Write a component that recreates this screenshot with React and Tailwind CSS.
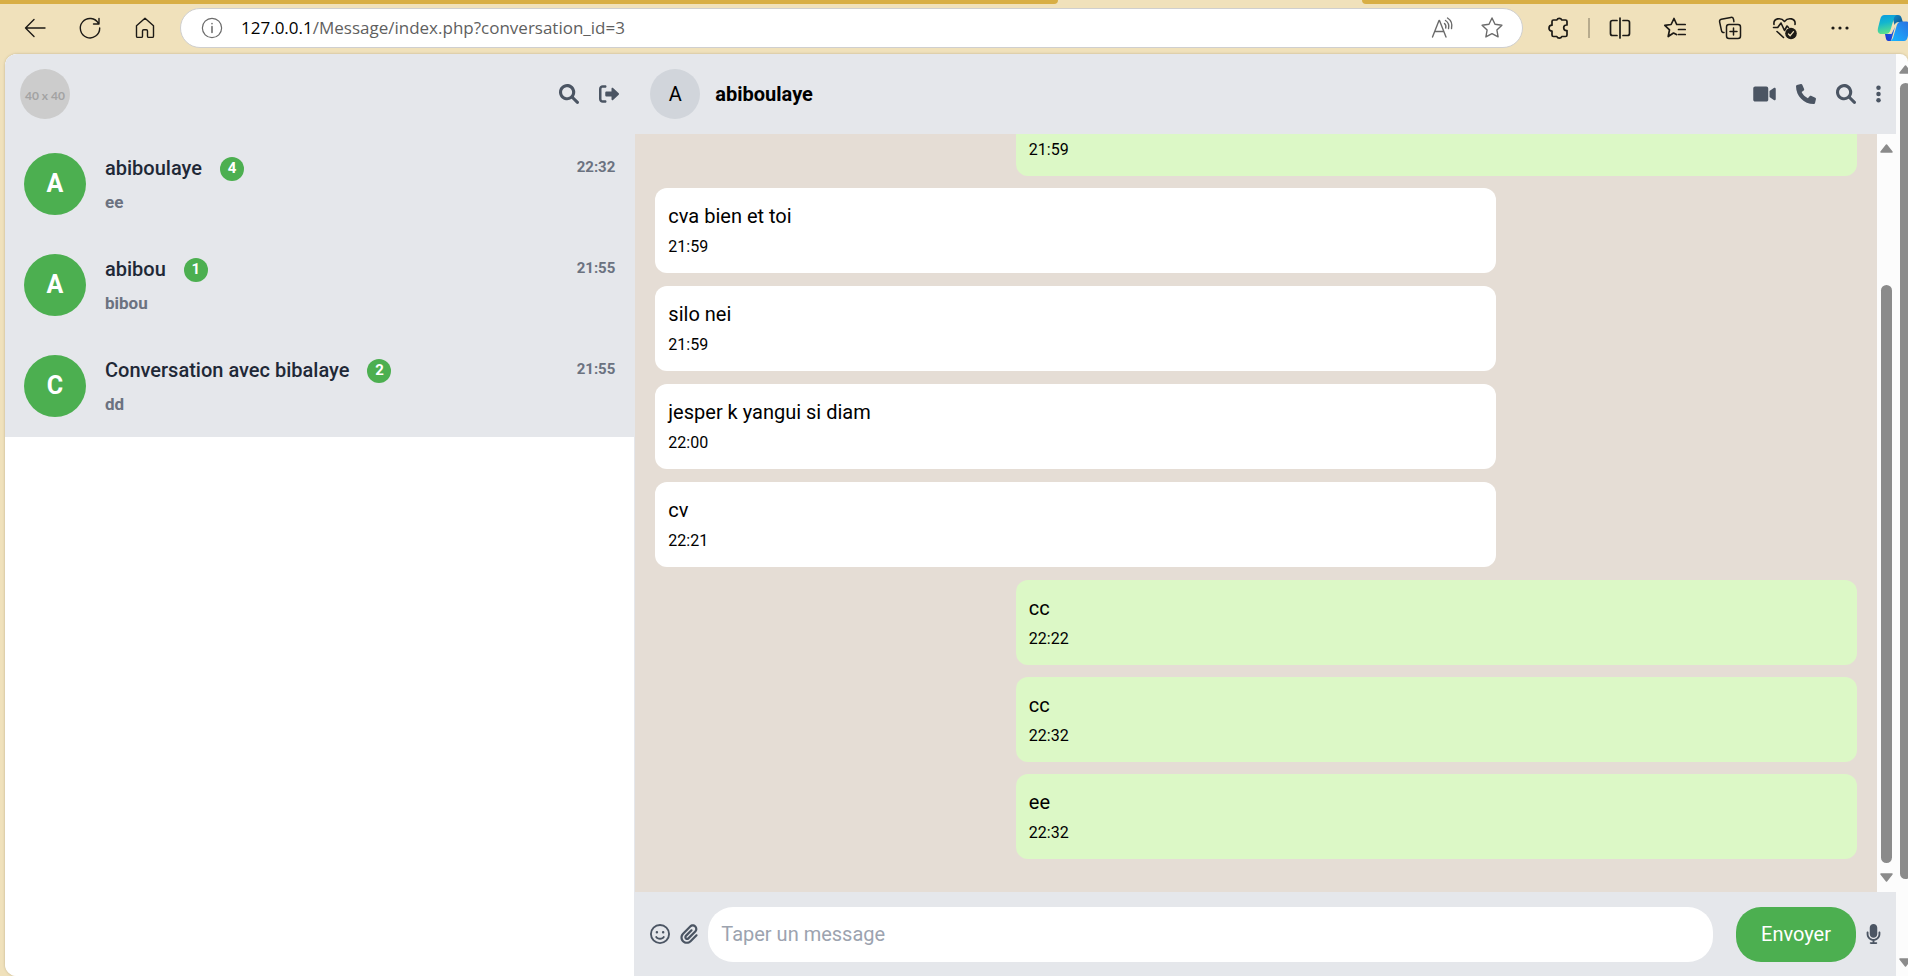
import React from "react";
import { FaRegFaceSmile, FaPaperclip, FaMicrophone } from "react-icons/fa6";

const conversations = [
  { name: "abiboulaye", initial: "A", unread: 4, time: "22:32", last: "ee" },
  { name: "abibou", initial: "A", unread: 1, time: "21:55", last: "bibou" },
  { name: "Conversation avec bibalaye", initial: "C", unread: 2, time: "21:55", last: "dd" },
];

const messages = [
  { text: "", time: "21:59", sent: true },
  { text: "cva bien et toi", time: "21:59" },
  { text: "silo nei", time: "21:59" },
  { text: "jesper k yangui si diam", time: "22:00" },
  { text: "cv", time: "22:21" },
  { text: "cc", time: "22:22", sent: true },
  { text: "cc", time: "22:32", sent: true },
  { text: "ee", time: "22:32", sent: true },
];

function Solid({ viewBox = "0 0 512 512", className, d }) {
  return (
    <svg viewBox={viewBox} className={className} fill="currentColor" aria-hidden="true">
      <path d={d} />
    </svg>
  );
}

const SearchIcon = ({ className }) => (
  <Solid
    className={className}
    d="M500.3 443.7l-119.7-119.7c27.220-40.410 40.650-90.900 33.460-144.700C401.800 87.790 326.800 13.320 235.200 1.723C99.010-15.510-15.510 99.010 1.724 235.200c11.600 91.640 86.080 166.700 177.600 178.900c53.800 7.189 104.300-6.236 144.700-33.460l119.700 119.700c15.620 15.620 40.950 15.620 56.570 0C515.900 484.700 515.900 459.300 500.300 443.700zM79.100 208c0-70.580 57.420-128 128-128s128 57.420 128 128c0 70.580-57.420 128-128 128S79.100 278.600 79.100 208z"
  />
);

const LogoutIcon = ({ className }) => (
  <Solid
    className={className}
    d="M96 480h64C177.700 480 192 465.700 192 448S177.700 416 160 416H96c-17.670 0-32-14.330-32-32V128c0-17.670 14.330-32 32-32h64C177.700 96 192 81.670 192 64S177.700 32 160 32H96C42.980 32 0 74.980 0 128v256C0 437 42.980 480 96 480zM504.800 238.500l-144.100-136c-6.975-6.578-17.200-8.375-26-4.594c-8.803 3.797-14.510 12.470-14.510 22.050l-.0918 72l-128-.001c-17.690 0-32.020 14.330-32.020 32v64c0 17.670 14.340 32 32.020 32l128 .001l.0918 71.100c0 9.578 5.707 18.250 14.510 22.050c8.803 3.781 19.030 1.984 26-4.594l144.100-136C514.400 264.400 514.400 247.600 504.800 238.500z"
  />
);

const VideoIcon = ({ className }) => (
  <Solid
    viewBox="0 0 576 512"
    className={className}
    d="M384 112v288c0 26.510-21.490 48-48 48h-288c-26.510 0-48-21.490-48-48v-288c0-26.510 21.490-48 48-48h288C362.500 64 384 85.490 384 112zM576 127.500v256.900c0 25.500-29.170 40.390-50.390 25.790L416 334.700V177.300l109.600-75.560C546.900 87.130 576 102.100 576 127.500z"
  />
);

const PhoneIcon = ({ className }) => (
  <Solid
    className={className}
    d="M511.200 387l-23.250 100.800c-3.266 14.250-15.790 24.220-30.460 24.220C205.200 512 0 306.800 0 54.500c0-14.660 9.969-27.200 24.220-30.450l100.800-23.250C139.700-2.602 154.700 5.018 160.800 18.920l46.520 108.500c5.438 12.780 1.770 27.670-8.980 36.450L144.500 207.100c33.980 69.220 90.260 125.500 159.500 159.500l44.080-53.800c8.688-10.780 23.690-14.510 36.470-8.975l108.500 46.510C506.100 357.200 514.600 372.400 511.200 387z"
  />
);

const EllipsisIcon = ({ className }) => (
  <svg viewBox="0 0 128 512" className={className} fill="currentColor" aria-hidden="true">
    <circle cx="64" cy="96" r="58" />
    <circle cx="64" cy="256" r="58" />
    <circle cx="64" cy="416" r="58" />
  </svg>
);

function Line({ children, className = "size-6", width = 1.4 }) {
  return (
    <svg
      viewBox="0 0 24 24"
      className={className}
      fill="none"
      stroke="currentColor"
      strokeWidth={width}
      strokeLinecap="round"
      strokeLinejoin="round"
      aria-hidden="true"
    >
      {children}
    </svg>
  );
}

function ToolButton({ label, children }) {
  return (
    <button type="button" aria-label={label} className="flex h-10 w-[55px] shrink-0 items-center justify-center">
      {children}
    </button>
  );
}

function Copilot() {
  return (
    <svg viewBox="0 0 36 28" className="h-7 w-9 shrink-0" aria-hidden="true">
      <defs>
        <linearGradient id="cp-a" x1="0" y1="0" x2="0.2" y2="1">
          <stop offset="0" stopColor="#0d9be0" />
          <stop offset="0.45" stopColor="#12b5cf" />
          <stop offset="1" stopColor="#5be08c" />
        </linearGradient>
        <linearGradient id="cp-b" x1="1" y1="0" x2="0" y2="1">
          <stop offset="0" stopColor="#2b6fe0" />
          <stop offset="0.6" stopColor="#1f9bf5" />
          <stop offset="1" stopColor="#12b8ff" />
        </linearGradient>
        <linearGradient id="cp-c" x1="0" y1="0" x2="1" y2="1">
          <stop offset="0" stopColor="#1390cf" />
          <stop offset="1" stopColor="#0c4f86" />
        </linearGradient>
        <linearGradient id="cp-d" x1="0" y1="1" x2="1" y2="0">
          <stop offset="0" stopColor="#1a35d0" />
          <stop offset="1" stopColor="#1c6be8" />
        </linearGradient>
      </defs>
      <path d="M15 1h6c2 0 3 1.200 3.600 3l1.200 4h-4c-2 0-3.500 1-4.300 3z" fill="url(#cp-c)" />
      <path d="M8 20h6.500l3.500-7-4 14h-2.500c-1.600 0-2.300-1.200-2.700-3z" fill="url(#cp-d)" />
      <path d="M7.500 1h12c-1.500.8-2.200 2-2.700 3.800l-3.300 11.200c-.8 2.800-2.400 4-5 4H4.500C1.200 20 .2 17.500 1 14L3.300 5C4 2.300 5.300 1 7.500 1z" fill="url(#cp-a)" />
      <path d="M27 27H13c1.700-.5 2.600-1.800 3.200-3.800l3.500-11.600c.9-2.800 2.400-4.100 5-4.100h4.300c3.300 0 4.300 2.500 3.500 6L30.700 23c-.7 2.700-1.700 4-3.700 4z" fill="url(#cp-b)" />
    </svg>
  );
}

function TabStrip() {
  return (
    <div className="flex h-1 shrink-0">
      <div className="w-[1058px] shrink rounded-br-lg bg-[#d8ae45]" />
      <div className="w-[304px] shrink-0" />
      <div className="flex-1 rounded-bl-lg bg-[#d8ae45]" />
    </div>
  );
}

function Toolbar() {
  return (
    <nav aria-label="Navigateur" className="flex h-[50px] shrink-0 items-center pb-[2px] pl-[7px] text-[#1c1a16]">
      <ToolButton label="Retour">
        <Line>
          <path d="M22 12H2.500M11 3.500 2.500 12l8.500 8.500" />
        </Line>
      </ToolButton>
      <ToolButton label="Actualiser">
        <Line>
          <path d="M20.500 7.500A9.700 9.700 0 1 0 21.700 12M21 2.500v5.500h-5.500" />
        </Line>
      </ToolButton>
      <ToolButton label="Accueil">
        <Line>
          <path d="M3.500 9.800 12 2.200l8.500 7.600v10.400c0 .7-.5 1.200-1.200 1.200h-3.600c-.7 0-1.200-.5-1.200-1.200V15c0-.7-.5-1.200-1.200-1.200h-2.600c-.7 0-1.200.5-1.200 1.200v5.200c0 .7-.5 1.200-1.200 1.200H4.700c-.7 0-1.200-.5-1.200-1.200z" />
        </Line>
      </ToolButton>

      <div className="ml-2 flex h-10 min-w-0 flex-1 items-center rounded-full border border-[#cfcfcf] bg-white pr-[5px] pl-5">
        <Line className="size-[22px] shrink-0 text-[#6b6b6b]" width={1.3}>
          <circle cx="12" cy="12" r="10.500" />
          <path d="M12 10.500v6.500M12 7.200v.2" strokeWidth="1.700" />
        </Line>
        <p className="ml-[18px] flex-1 truncate font-['Open_Sans','Noto_Sans',sans-serif] text-[17px] leading-7 text-[#5f5f5f]">
          <span className="text-black">127.0.0.1</span>/Message/index.php?conversation_id=3
        </p>
        <button type="button" aria-label="Lecture à voix haute" className="flex w-[50px] justify-center text-[#6b6b6b]">
          <Line>
            <path d="M2.500 21 9 4.500h.5L16 21M5 15.500h8.500M14.500 7.500c1.400 1.200 1.700 2.600 1.200 4.500M15.500 4.500c2.800 1.800 3.800 4.500 3 8M17.500 2c3.700 2.300 5 6 4 10.500" />
          </Line>
        </button>
        <button type="button" aria-label="Ajouter aux favoris" className="flex w-[50px] justify-center text-[#6b6b6b]">
          <Line>
            <path d="m12 2 3 6.300 6.900.9-5 4.800 1.200 6.900L12 17.600l-6.100 3.300L7.100 14l-5-4.800 6.900-.9z" />
          </Line>
        </button>
      </div>

      <div className="ml-2 flex shrink-0 items-center">
        <ToolButton label="Extensions">
          <Line width={1.700}>
            <path d="M6.500 4h3.300a2.700 2.700 0 0 1 5 0H18.500c.9 0 1.500.6 1.500 1.500V9h-.5a2.800 2.800 0 0 0 0 5.600h.5v4.400c0 .9-.6 1.500-1.500 1.500h-3.700a2.700 2.700 0 0 1-5 0H6.500c-.9 0-1.500-.6-1.500-1.500v-3.800a3 3 0 0 1 0-6V5.500C5 4.600 5.600 4 6.500 4z" />
          </Line>
        </ToolButton>
        <span className="mx-[2px] h-5 w-[2px] bg-[#b7ab8d]" />
        <ToolButton label="Fractionner l'écran">
          <Line width={1.700}>
            <path d="M12 2v20M9 4.500H4.500c-1.200 0-2 .8-2 2v11c0 1.200.8 2 2 2H9M15 4.500h4.500c1.200 0 2 .8 2 2v11c0 1.200-.8 2-2 2H15" />
          </Line>
        </ToolButton>
        <ToolButton label="Favoris">
          <Line width={1.700}>
            <path d="M13.500 18.500 10.500 17l-5.300 3.500 1.300-6.700-4.700-4.500 6.300-.8L11 2.500l2.700 6h8.500M15.500 13.500h6.700M15.500 18.500h6.700" />
          </Line>
        </ToolButton>
        <ToolButton label="Collections">
          <Line width={1.500}>
            <rect x="8.500" y="8.500" width="14" height="14" rx="2.500" />
            <path d="M15.500 12v7M12 15.500h7M6 16.500c-1.300.2-2.300-.5-2.500-1.800L1.600 5.800C1.400 4.500 2 3.500 3.300 3.200l9.500-1.800c1.400-.2 2.400.5 2.700 1.800l.4 2.500" />
          </Line>
        </ToolButton>
        <ToolButton label="Performances">
          <svg viewBox="0 0 28 26" className="h-[26px] w-7" fill="none" stroke="currentColor" strokeWidth="1.600" strokeLinecap="round" strokeLinejoin="round" aria-hidden="true">
            <path d="M3 9.500C2 3 10 2 13.500 6.500 17 2 25 3 24 9.500M2.500 12.500h4.200L10 8l3.500 7.500L16 11l1.500 1.500M6 16.500l6.500 6" />
            <circle cx="20" cy="18.500" r="5.800" fill="currentColor" stroke="none" />
            <path d="m17.500 19 1.700 1.700 3.300-4" stroke="#f0e1bb" strokeWidth="1.300" />
          </svg>
        </ToolButton>
        <ToolButton label="Paramètres et plus">
          <svg viewBox="0 0 24 24" className="size-6" fill="currentColor" aria-hidden="true">
            <circle cx="5" cy="12" r="1.600" />
            <circle cx="12" cy="12" r="1.600" />
            <circle cx="19" cy="12" r="1.600" />
          </svg>
        </ToolButton>
        <button type="button" aria-label="Copilot" className="ml-[10px] flex w-[31px] justify-start overflow-hidden">
          <Copilot />
        </button>
      </div>
    </nav>
  );
}

function Arrow({ down = false }) {
  return (
    <svg viewBox="0 0 13 9" className="h-[9px] w-[13px] shrink-0" fill="#8b8b8b" stroke="#8b8b8b" strokeWidth="1.500" strokeLinejoin="round" aria-hidden="true">
      <path d={down ? "M1 1h11L6.500 8z" : "M1 8h11L6.500 1z"} />
    </svg>
  );
}

function IconButton({ label, icon: Icon, size = "size-5" }) {
  return (
    <button type="button" aria-label={label} className="text-[#4b5563]">
      <Icon className={size} />
    </button>
  );
}

function Sidebar() {
  return (
    <aside className="flex w-1/3 shrink-0 flex-col border-r border-[#e5e7eb] bg-white">
      <header className="flex h-20 items-center justify-between bg-[#e5e7eb] px-[15px]">
        <div className="flex size-[50px] items-center justify-center rounded-full bg-[#cccccc] pt-1 font-[Lato,sans-serif] text-[12px] font-bold text-[#a3a3a3]">
          40 x 40
        </div>
        <div className="flex gap-5">
          <IconButton label="Rechercher" icon={SearchIcon} />
          <IconButton label="Se déconnecter" icon={LogoutIcon} />
        </div>
      </header>
      <ul>
        {conversations.map((c) => (
          <li key={c.name}>
            <a href={`#${c.initial}${c.unread}`} className="flex h-[101px] items-center bg-[#e5e7eb] px-[19px]">
              <span className="mt-[19px] flex size-[62px] shrink-0 items-center justify-center self-start rounded-full bg-[#4caf50] text-[25px] font-bold text-white">
                {c.initial}
              </span>
              <span className="ml-[19px] flex min-w-0 flex-1 flex-col gap-1">
                <span className="flex items-center">
                  <span className="text-[20px] leading-[30px] font-medium text-[#1f2937]">{c.name}</span>
                  <span className="mt-[2px] ml-[18px] flex size-6 items-center justify-center rounded-full bg-[#4caf50] text-[15px] font-bold text-white">
                    {c.unread}
                  </span>
                  <time className="ml-auto text-[15px] font-bold text-[#6b7280]">{c.time}</time>
                </span>
                <span className="text-[17px] leading-[30px] font-bold text-[#6b7280]">{c.last}</span>
              </span>
            </a>
          </li>
        ))}
      </ul>
    </aside>
  );
}

function Bubble({ text, time, sent }) {
  return (
    <li
      className={
        sent
          ? "mb-3 flex h-[85px] w-[70%] shrink-0 flex-col justify-end self-end rounded-xl bg-[#dcf8c6] px-[13px] pb-[11px]"
          : "mb-[13px] flex h-[85px] w-[70%] shrink-0 flex-col justify-end self-start rounded-xl bg-white px-[13px] pb-[11px]"
      }
    >
      {text && <p className="text-[20px] leading-8">{text}</p>}
      <time className="text-[16px] leading-[30px]">{time}</time>
    </li>
  );
}

function Chat() {
  return (
    <main className="flex min-w-0 flex-1 flex-col">
      <header className="flex h-20 shrink-0 items-center justify-between bg-[#e5e7eb] px-[15px]">
        <div className="flex items-center gap-[15px]">
          <span className="flex size-[50px] items-center justify-center rounded-full bg-[#d1d5db] text-[20px]">A</span>
          <h1 className="text-[20px] font-bold">abiboulaye</h1>
        </div>
        <div className="flex gap-5">
          <IconButton label="Appel vidéo" icon={VideoIcon} size="h-5 w-[23px]" />
          <IconButton label="Appeler" icon={PhoneIcon} />
          <IconButton label="Rechercher dans la discussion" icon={SearchIcon} />
          <IconButton label="Menu" icon={EllipsisIcon} size="h-5 w-[5px]" />
        </div>
      </header>

      <div className="flex min-h-0 flex-1">
        <ul className="flex flex-1 flex-col justify-end overflow-hidden bg-[#e5ddd5] px-5 pb-[21px]">
          {messages.map((m, i) => (
            <Bubble key={i} {...m} />
          ))}
        </ul>
        <div className="flex w-[19px] flex-col items-center bg-[#fcfcfc] py-[10px]">
          <Arrow />
          <div className="mt-[132px] mb-[10px] w-[11px] flex-1 rounded-full bg-[#8b8b8b]" />
          <Arrow down />
        </div>
      </div>

      <form className="flex h-[84px] shrink-0 items-center bg-[#e5e7eb] px-[15px]" onSubmit={(e) => e.preventDefault()}>
        <div className="flex gap-[10px]">
          <IconButton label="Émojis" icon={FaRegFaceSmile} />
          <IconButton label="Joindre un fichier" icon={FaPaperclip} size="h-5 w-[18px]" />
        </div>
        <input
          type="text"
          aria-label="Message"
          placeholder="Taper un message"
          className="ml-[10px] h-[55px] min-w-0 flex-1 rounded-[25px] bg-white px-[13px] text-[20px] placeholder:text-[#9ca3af]"
        />
        <button type="submit" className="mr-[10px] ml-[23px] h-[55px] rounded-[25px] bg-[#4caf50] px-[25px] text-[20px] text-white">
          Envoyer
        </button>
        <IconButton label="Message vocal" icon={FaMicrophone} size="h-5 w-[15px]" />
      </form>
    </main>
  );
}

export default function App() {
  return (
    <div className="flex h-screen flex-col overflow-hidden bg-[#f0e1bb] font-[Roboto,sans-serif] text-black">
      <TabStrip />
      <Toolbar />
      <div className="ml-[5px] flex min-h-0 flex-1 overflow-hidden rounded-l-xl rounded-tr-lg bg-[#fcfcfc] shadow-[0_0_2px_1px_#d9cba6]">
        <div className="flex min-w-0 flex-1">
          <Sidebar />
          <Chat />
        </div>
        <div className="flex w-3 shrink-0 flex-col items-start overflow-hidden pt-[11px] pb-[9px] pl-[3px]">
          <Arrow />
          <div className="mt-[9px] mb-[79px] ml-[1px] w-[11px] flex-1 rounded-full bg-[#8b8b8b]" />
          <Arrow down />
        </div>
      </div>
    </div>
  );
}
